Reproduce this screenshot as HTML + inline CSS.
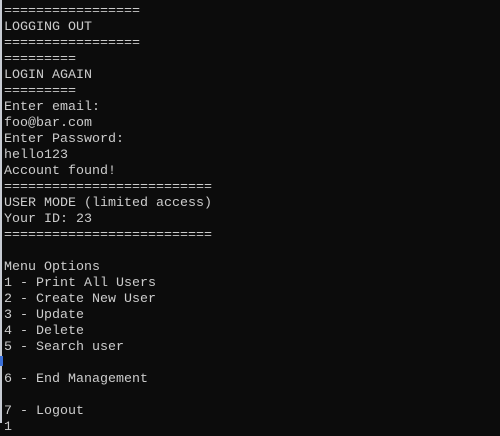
<!DOCTYPE html>
<html><head><meta charset="utf-8"><style>
html,body{margin:0;padding:0;}
body{width:500px;height:423px;overflow:hidden;background:#0c0c0c;position:relative;}
.edge{position:absolute;left:0;top:0;width:2px;height:423px;background:#c8ccd4;}
.blue{position:absolute;left:0;top:356px;width:3px;height:10px;background:#3a6fd8;}
pre{position:absolute;left:4px;top:4px;margin:0;font-family:"Liberation Mono",monospace;font-size:13.33px;line-height:16px;color:#cccccc;}
</style></head><body>
<div class="edge"></div><div class="blue"></div>
<pre>=================
LOGGING OUT
=================
=========
LOGIN AGAIN
=========
Enter email:
foo@bar.com
Enter Password:
hello123
Account found!
==========================
USER MODE (limited access)
Your ID: 23
==========================

Menu Options
1 - Print All Users
2 - Create New User
3 - Update
4 - Delete
5 - Search user

6 - End Management

7 - Logout
1</pre>
</body></html>
